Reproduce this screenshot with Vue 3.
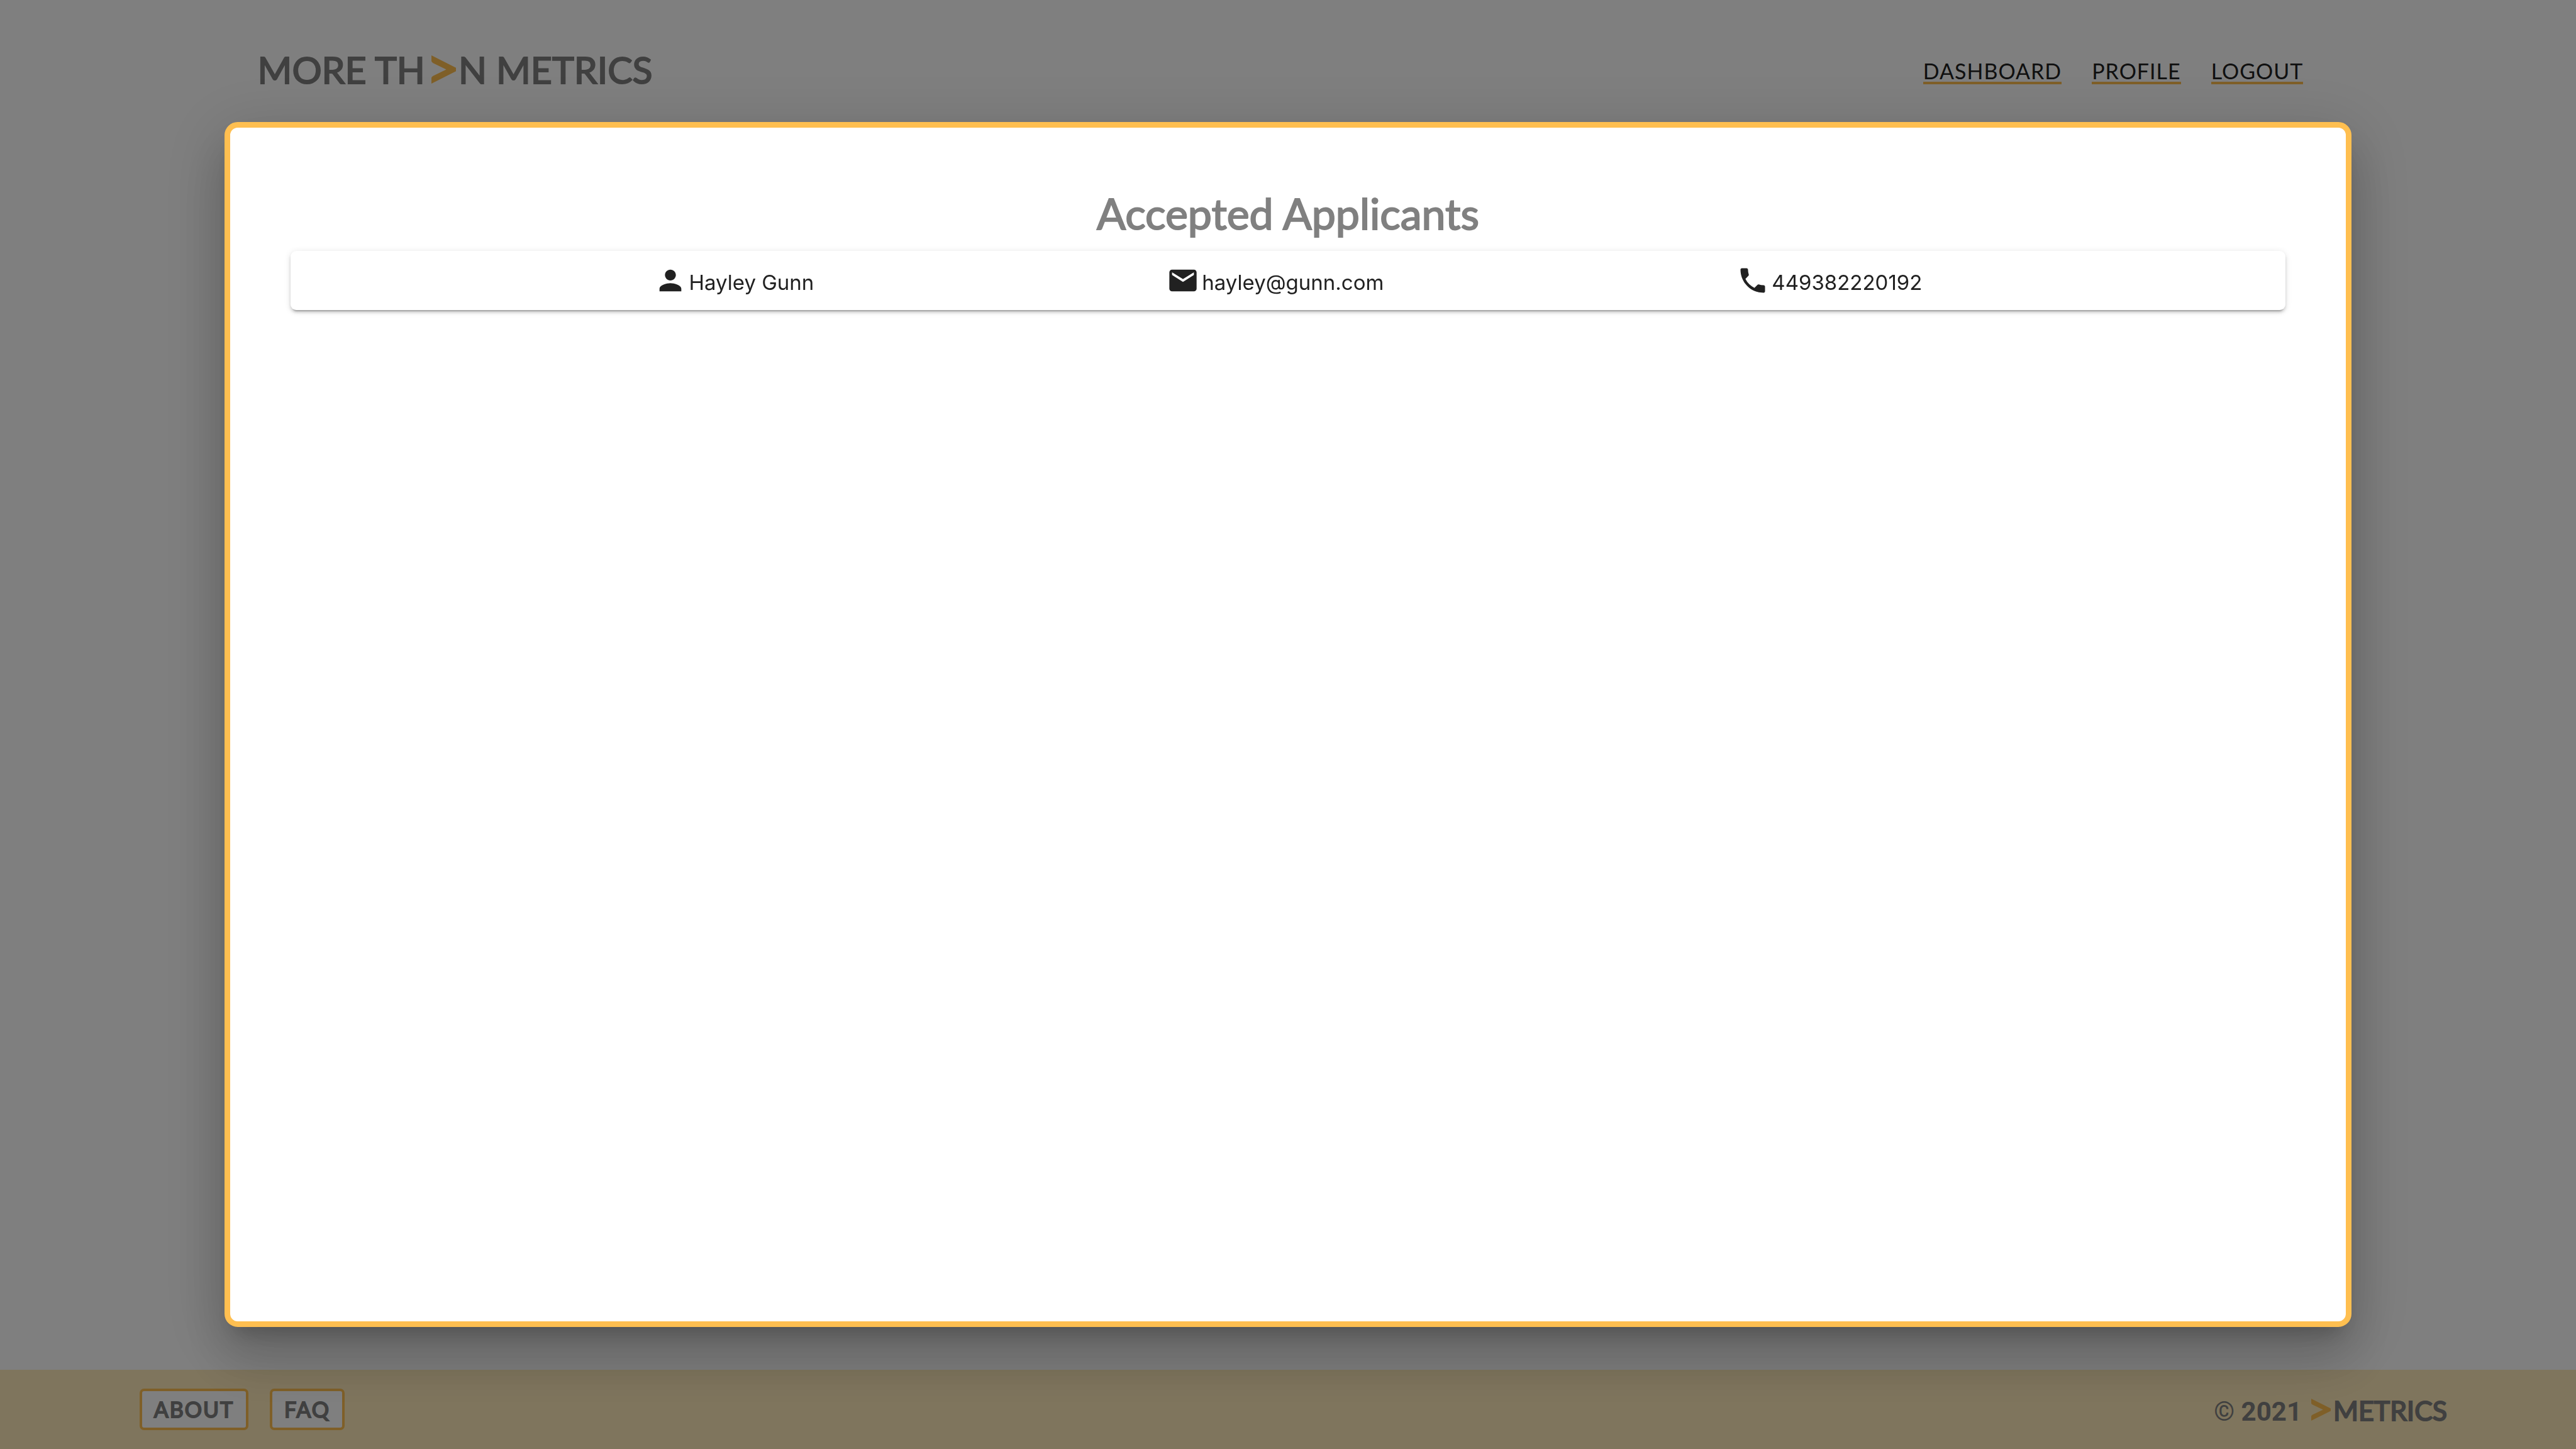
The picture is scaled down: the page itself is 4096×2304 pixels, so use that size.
<script setup>
const links = ['Dashboard', 'Profile', 'Logout']
const footerLinks = ['About', 'FAQ']
const applicants = [
  { name: 'Hayley Gunn', email: 'hayley@gunn.com', phone: '449382220192' },
]
</script>

<template>
  <div class="page">
    <header class="header">
      <div class="brand">
        <span>MORE TH</span>
        <svg class="chevron" viewBox="0 0 76 84" preserveAspectRatio="none" aria-hidden="true">
          <path d="M0 0 76 37V47L0 84V67Q0 64 5 61L46 42 5 23Q0 20 0 17Z" />
        </svg>
        <span>N METRICS</span>
      </div>
      <nav class="nav">
        <a v-for="link in links" :key="link" href="#">{{ link }}</a>
      </nav>
    </header>

    <footer class="footer">
      <nav class="footer-nav">
        <a v-for="link in footerLinks" :key="link" href="#">{{ link }}</a>
      </nav>
      <div class="copyright">
        <span class="year">© 2021</span>
        <svg class="chevron" viewBox="0 0 76 84" preserveAspectRatio="none" aria-hidden="true">
          <path d="M0 0 76 37V47L0 84V67Q0 64 5 61L46 42 5 23Q0 20 0 17Z" />
        </svg>
        <span>METRICS</span>
      </div>
    </footer>

    <div class="backdrop">
      <section class="modal" role="dialog" aria-modal="true" aria-labelledby="modal-title">
        <h2 id="modal-title" class="title">Accepted Applicants</h2>
        <ul class="list">
          <li v-for="person in applicants" :key="person.email" class="card">
            <div class="item">
              <svg class="icon" viewBox="0 0 24 24" aria-hidden="true">
                <path d="M12 12c2.210 0 4-1.790 4-4s-1.790-4-4-4-4 1.790-4 4 1.790 4 4 4zm0 2c-2.670 0-8 1.340-8 4v2h16v-2c0-2.660-5.330-4-8-4z" />
              </svg>
              <span>{{ person.name }}</span>
            </div>
            <div class="item">
              <svg class="icon" viewBox="0 0 24 24" aria-hidden="true">
                <path d="M20 4H4c-1.100 0-1.990.9-1.990 2L2 18c0 1.100.9 2 2 2h16c1.100 0 2-.9 2-2V6c0-1.100-.9-2-2-2zm0 4l-8 5-8-5V6l8 5 8-5v2z" />
              </svg>
              <span>{{ person.email }}</span>
            </div>
            <div class="item">
              <svg class="icon" viewBox="0 0 24 24" aria-hidden="true">
                <path d="M6.620 10.790c1.440 2.830 3.760 5.140 6.590 6.590l2.200-2.200c.27-.27.67-.36 1.020-.24 1.120.37 2.330.57 3.570.57.55 0 1 .45 1 1V20c0 .55-.45 1-1 1-9.390 0-17-7.610-17-17 0-.55.45-1 1-1h3.500c.55 0 1 .45 1 1 0 1.250.2 2.450.57 3.570.11.35.03.74-.25 1.020l-2.200 2.200z" />
              </svg>
              <span>{{ person.phone }}</span>
            </div>
          </li>
        </ul>
      </section>
    </div>
  </div>
</template>

<style>
body {
  margin: 0;
  background: #fff;
}
</style>

<style scoped>
.page {
  display: flex;
  flex-direction: column;
  justify-content: space-between;
  min-height: 100vh;
  font-family: Lato, sans-serif;
  color: #212121;
}

.header {
  display: flex;
  align-items: center;
  justify-content: space-between;
  height: 220px;
  padding: 0 10%;
}

.brand,
.copyright {
  display: flex;
  color: #808080;
  -webkit-text-stroke: 2px #808080;
  white-space: pre;
}

.brand {
  align-items: center;
  font-size: 59px;
  line-height: 63px;
}

.chevron {
  fill: #ffbf50;
}

.brand .chevron {
  width: 39px;
  height: 45px;
  margin: 0 4px 0 10px;
}

.nav {
  display: flex;
  padding-top: 10px;
}

.nav a {
  margin: 0 24px;
  border-bottom: 4px solid #ffbf50;
  font-size: 34px;
  line-height: 34px;
  letter-spacing: 1px;
  color: #212121;
  text-decoration: none;
  text-transform: uppercase;
}

.footer {
  display: flex;
  align-items: center;
  justify-content: space-between;
  height: 126px;
  padding: 0 5%;
  background: #ffebbb;
}

.footer-nav {
  display: flex;
}

.footer-nav a {
  margin: 0 17px;
  padding: 0 19px;
  border: 4px solid #ffbf50;
  border-radius: 7px;
  background: #fff;
  font-size: 34px;
  line-height: 58px;
  letter-spacing: 2px;
  color: #808080;
  -webkit-text-stroke: 2px #808080;
  text-decoration: none;
  text-transform: uppercase;
}

.copyright {
  align-items: baseline;
  padding-top: 6px;
  font-size: 43px;
  line-height: 54px;
}

.copyright .chevron {
  width: 31px;
  height: 35px;
  margin: 0 4px 0 15px;
}

.year {
  font-family: Roboto, sans-serif;
  font-size: 42px;
  font-weight: 700;
  -webkit-text-stroke: 0;
}

.backdrop {
  position: fixed;
  inset: 0;
  display: flex;
  align-items: center;
  justify-content: center;
  background: rgba(0, 0, 0, 0.5);
}

.modal {
  box-sizing: border-box;
  width: calc(80% + 106px);
  height: calc(80% + 73px);
  padding: 96px;
  border: 9px solid #ffbf50;
  border-radius: 21px;
  background: #fff;
  box-shadow:
    0 23px 32px -15px rgba(0, 0, 0, 0.2),
    0 51px 81px 6px rgba(0, 0, 0, 0.14),
    0 19px 98px 17px rgba(0, 0, 0, 0.12);
}

.title {
  margin: 0 0 20px;
  font-size: 68px;
  font-weight: 400;
  line-height: 80px;
  text-align: center;
  color: #808080;
  -webkit-text-stroke: 2px #808080;
}

.list {
  margin: 0;
  padding: 0;
  list-style: none;
}

.card {
  display: flex;
  justify-content: space-evenly;
  padding: 21px 17px;
  border-radius: 9px;
  background: #fff;
  box-shadow:
    0 6px 2px -4px rgba(0, 0, 0, 0.2),
    0 4px 4px 0 rgba(0, 0, 0, 0.14),
    0 2px 11px 0 rgba(0, 0, 0, 0.12);
}

.item {
  display: flex;
  align-items: center;
  gap: 4px;
  font-family: Inter, sans-serif;
  font-size: 33px;
  line-height: 46px;
}

.item span {
  padding-top: 6px;
}

.icon {
  width: 52px;
  height: 52px;
  fill: #212121;
}
</style>
